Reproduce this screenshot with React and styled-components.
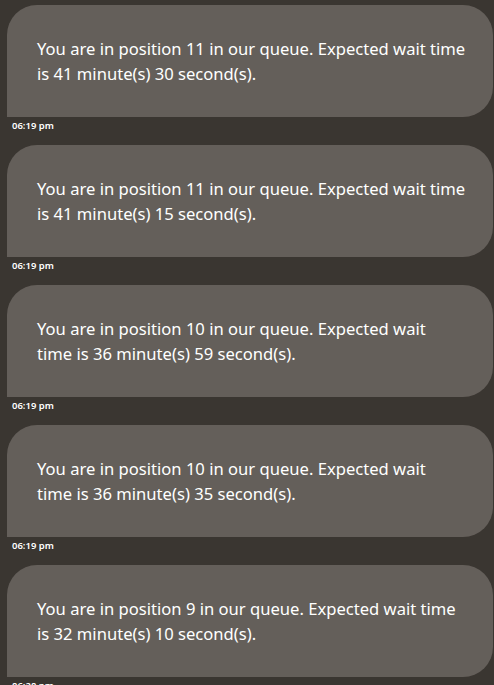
import React from 'react'
import styled, { createGlobalStyle } from 'styled-components'

const Global = createGlobalStyle`
  html, body {
    margin: 0;
    padding: 0;
    background: #3a3631;
  }
`

const Wrapper = styled.div`
  display: flex;
  flex-direction: column;
  padding: 5px 1px 0 7px;
  font-family: "Noto Sans", "Open Sans", sans-serif;
  color: #fff;
`

const Message = styled.div`
  display: flex;
  flex-direction: column;
`

const Bubble = styled.div`
  background: #645f5a;
  border-radius: 30px 30px 30px 0;
  padding: 31px 28px 30px 30px;
  height: 112px;
  box-sizing: border-box;
  font-size: 16.6px;
  line-height: 25px;
`

const Line = styled.span`
  display: block;
  white-space: nowrap;
`

const Time = styled.span`
  font-size: 9.5px;
  font-weight: 600;
  line-height: 12px;
  padding: 3px 0 0 5px;
  height: 25px;
`

// line breaks follow the reference's wrapping
const messages = [
  { lines: ['You are in position 11 in our queue. Expected wait time', 'is 41 minute(s) 30 second(s).'], time: '06:19 pm' },
  { lines: ['You are in position 11 in our queue. Expected wait time', 'is 41 minute(s) 15 second(s).'], time: '06:19 pm' },
  { lines: ['You are in position 10 in our queue. Expected wait', 'time is 36 minute(s) 59 second(s).'], time: '06:19 pm' },
  { lines: ['You are in position 10 in our queue. Expected wait', 'time is 36 minute(s) 35 second(s).'], time: '06:19 pm' },
  { lines: ['You are in position 9 in our queue. Expected wait time', 'is 32 minute(s) 10 second(s).'], time: '06:20 pm' },
]

const App = () => {
  return (
    <>
      <Global />
      <Wrapper>
        {messages.map((m, i) => (
          <Message key={i}>
            <Bubble>
              {m.lines.map((l, j) => (
                <Line key={j}>{l}</Line>
              ))}
            </Bubble>
            <Time>{m.time}</Time>
          </Message>
        ))}
      </Wrapper>
    </>
  )
}

export default App
